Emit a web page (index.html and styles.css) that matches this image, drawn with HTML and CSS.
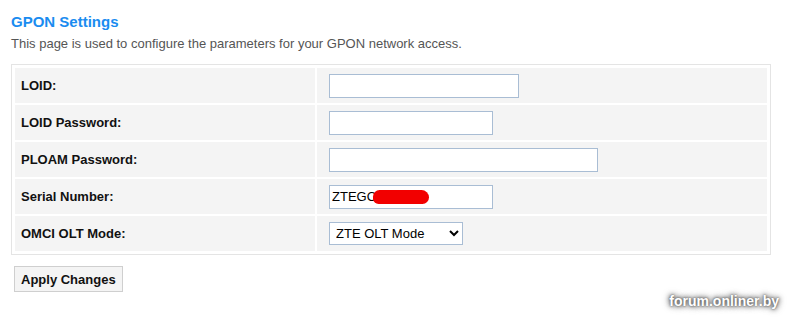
FILE: index.html
```html
<html lang="en">
<head>
    <meta charset="UTF-8">
    <title>GPON Settings</title>
    <link rel="stylesheet" href="styles.css">
</head>
<body>
<div id="content">
    <h1 class="page-title">GPON Settings</h1>
    <p class="page-desc">This page is used to configure the parameters for your GPON network access.</p>

    <table class="settings">
        <tr>
            <th>LOID:</th>
            <td><input type="text" class="field field-loid"></td>
        </tr>
        <tr>
            <th>LOID Password:</th>
            <td><input type="text" class="field field-short"></td>
        </tr>
        <tr>
            <th>PLOAM Password:</th>
            <td><input type="text" class="field field-long"></td>
        </tr>
        <tr>
            <th>Serial Number:</th>
            <td>
                <span class="serial-wrap">
                    <input type="text" class="field field-short" value="ZTEGO">
                    <span class="scribble"></span>
                </span>
            </td>
        </tr>
        <tr>
            <th>OMCI OLT Mode:</th>
            <td>
                <select class="mode">
                    <option>ZTE OLT Mode</option>
                    <option>Huawei OLT Mode</option>
                    <option>Custom Mode</option>
                </select>
            </td>
        </tr>
    </table>

    <div class="actions">
        <button type="button" class="apply">Apply Changes</button>
    </div>
</div>
<div class="watermark">forum.onliner.by</div>
</body>
</html>
```

FILE: styles.css
```css
body {
    margin: 0;
    padding: 0 11px;
    font-family: "Liberation Sans", Arial, sans-serif;
    background: #fff;
    color: #000;
}

.page-title {
    margin: 13px 0 0 0;
    font-size: 15px;
    line-height: 18px;
    font-weight: bold;
    color: #1a8cf0;
}

.page-desc {
    margin: 5px 0 0 0;
    font-size: 13px;
    line-height: 16px;
    color: #555;
}

.settings {
    margin-top: 12px;
    width: 760px;
    border: 1px solid #e4e4e4;
    border-spacing: 2px;
    padding: 1px;
}

.settings th,
.settings td {
    height: 35px;
    padding: 0;
    background: #f4f4f4;
    vertical-align: middle;
    font-size: 13px;
}

.settings th {
    width: 294px;
    padding-left: 6px;
    text-align: left;
    font-weight: bold;
    color: #111;
}

.settings td {
    padding-left: 12px;
}

.field {
    box-sizing: border-box;
    height: 24px;
    margin: 0;
    padding: 0 2px;
    border: 1px solid #a9bdd4;
    background: #fff;
    font-family: "Liberation Sans", Arial, sans-serif;
    font-size: 13px;
    color: #000;
    vertical-align: middle;
}

.field-loid { width: 190px; }
.field-short { width: 164px; }
.field-long { width: 269px; }

.serial-wrap {
    position: relative;
    display: inline-block;
    vertical-align: middle;
}

.scribble {
    position: absolute;
    left: 44px;
    top: 5px;
    width: 56px;
    height: 14px;
    background: #f20000;
    border-radius: 7px 8px 7px 6px;
}

.mode {
    box-sizing: border-box;
    width: 134px;
    height: 23px;
    margin: 0;
    padding: 0 2px;
    border: 1px solid #a9bdd4;
    border-radius: 0;
    background: #fff;
    font-family: "Liberation Sans", Arial, sans-serif;
    font-size: 13px;
    color: #000;
    vertical-align: middle;
}

.actions {
    margin-top: 11px;
    padding-left: 3px;
}

.apply {
    height: 26px;
    padding: 0 6px;
    border: 1px solid #cfcfcf;
    background: #f4f4f4;
    font-family: "Liberation Sans", Arial, sans-serif;
    font-size: 13px;
    font-weight: bold;
    color: #111;
}

.watermark {
    position: absolute;
    right: 21px;
    top: 293px;
    font-size: 14px;
    font-weight: bold;
    color: #fff;
    text-shadow: 0 0 2px #555, 0 0 4px #666, 0 0 6px #888, 0 0 8px #aaa;
}
```
